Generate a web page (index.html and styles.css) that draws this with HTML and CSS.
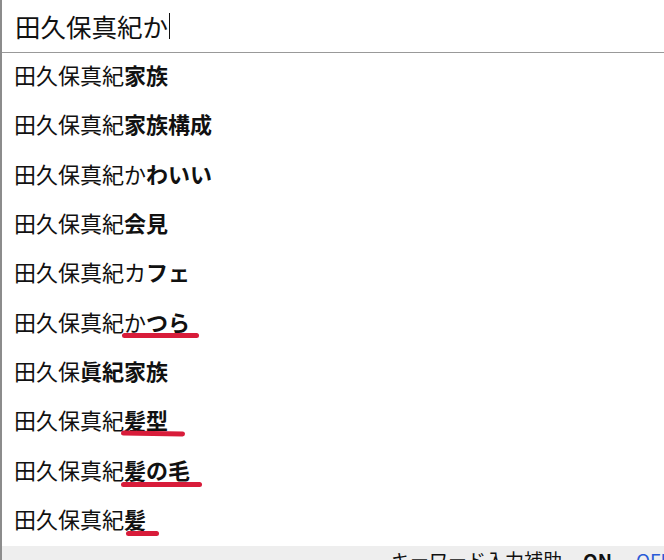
FILE: index.html
```html
<!DOCTYPE html>
<html lang="ja">
<head>
<meta charset="utf-8">
<link rel="stylesheet" href="styles.css">
</head>
<body>
<div class="box">
  <div class="search"><span class="query">田久保真紀か</span><span class="caret"></span></div>
  <ul class="list">
    <li class="row">田久保真紀<b>家族</b></li>
    <li class="row">田久保真紀<b>家族構成</b></li>
    <li class="row">田久保真紀か<b>わいい</b></li>
    <li class="row">田久保真紀<b>会見</b></li>
    <li class="row">田久保真紀カ<b>フェ</b></li>
    <li class="row">田久保真紀か<b>つら</b><span class="mark mark-a"></span></li>
    <li class="row">田久保<b>眞紀家族</b></li>
    <li class="row">田久保真紀<b>髪型</b><span class="mark mark-b"></span></li>
    <li class="row">田久保真紀<b>髪の毛</b><span class="mark mark-c"></span></li>
    <li class="row">田久保真紀<b>髪</b><span class="mark mark-d"></span></li>
  </ul>
  <div class="bar">キーワード入力補助<b class="on">ON</b><span class="off">OFF</span></div>
</div>
</body>
</html>
```
FILE: styles.css
```css
html, body {
  margin: 0;
  padding: 0;
  background: #fff;
}
body {
  font-family: "Noto Sans CJK JP", "Noto Sans", sans-serif;
  color: #111;
  width: 664px;
  height: 560px;
  overflow: hidden;
}
.box {
  border-left: 2px solid #8c8c8c;
  height: 560px;
  display: flex;
  flex-direction: column;
  box-sizing: border-box;
}
.search {
  height: 52px;
  flex: none;
  border-bottom: 1px solid #999;
  padding-left: 13px;
  display: flex;
  align-items: center;
  font-size: 25.5px;
  line-height: 1;
}
.caret {
  display: inline-block;
  width: 1px;
  height: 26px;
  background: #111;
  margin-left: 1px;
}
.list {
  list-style: none;
  margin: 0;
  padding: 0;
  flex: none;
}
.row {
  position: relative;
  height: 49.3px;
  padding-left: 12px;
  display: flex;
  align-items: center;
  font-size: 22px;
  line-height: 1;
  padding-bottom: 7px;
  box-sizing: border-box;
}
.row b {
  font-weight: 700;
}
.mark {
  position: absolute;
  height: 5px;
  border-radius: 3px;
  background: #d81c3a;
}
.mark-a { left: 120px; width: 77px; top: 34px; }
.mark-b { left: 119px; width: 64px; top: 33px; transform: rotate(0.8deg); }
.mark-c { left: 119px; width: 81px; top: 35px; }
.mark-d { left: 124px; width: 33px; top: 34px; }
.bar {
  flex: 1;
  background: #eeeeee;
  padding-left: 389px;
  padding-top: 3px;
  font-size: 19px;
  line-height: 1.2;
  white-space: nowrap;
  overflow: hidden;
}
.on {
  font-weight: 700;
  margin-left: 21px;
}
.off {
  color: #2a5bd7;
  margin-left: 24px;
}
```
